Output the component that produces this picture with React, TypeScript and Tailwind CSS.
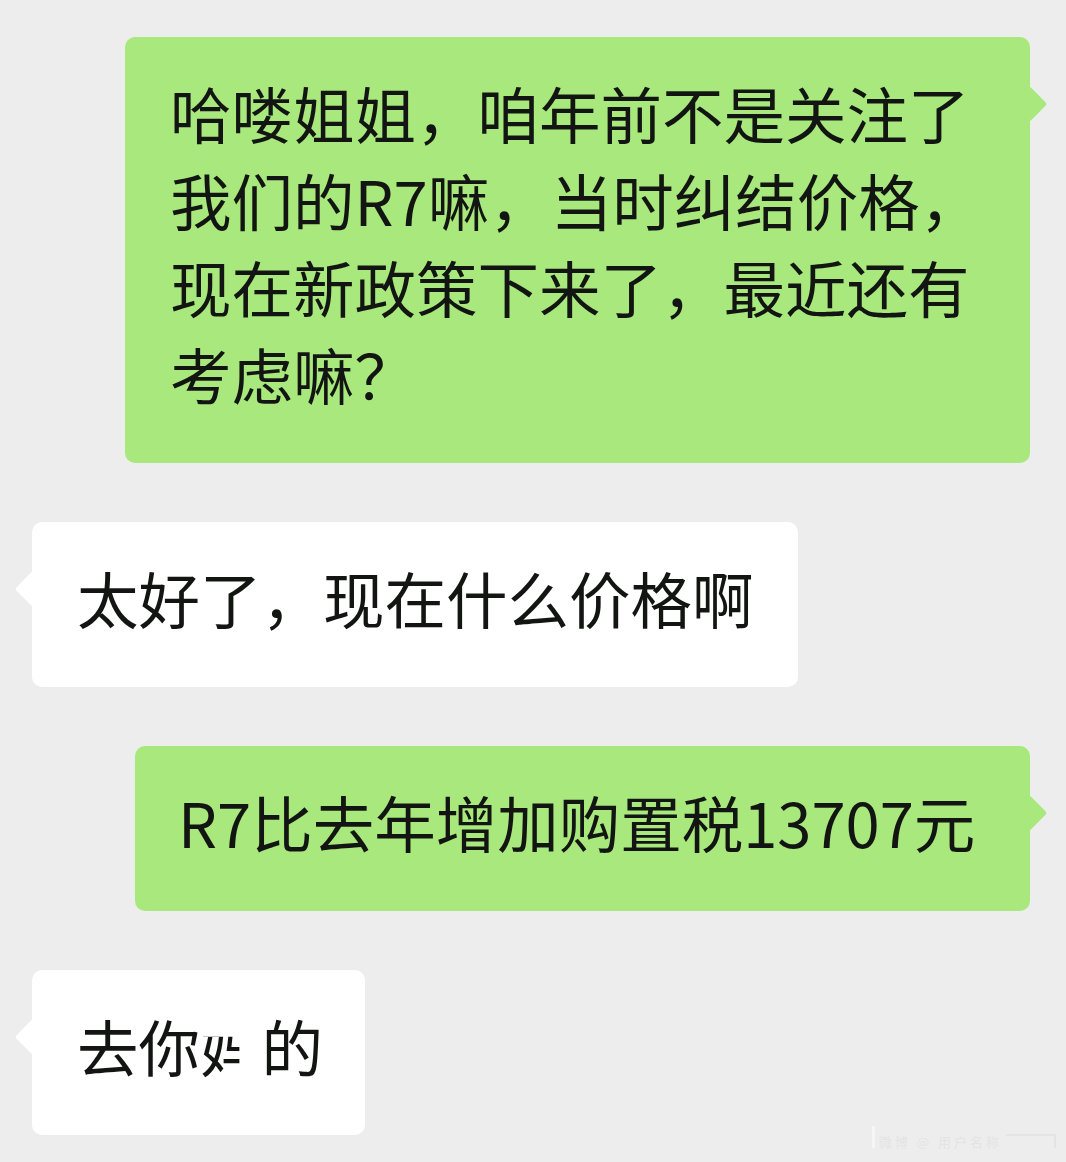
import type { ReactNode } from "react";

const font = { fontFamily: '"Noto Sans CJK SC", "Noto Sans", sans-serif' };

function Bubble({
  side,
  className,
  children,
}: {
  side: "left" | "right";
  className: string;
  children: ReactNode;
}) {
  const mine = side === "right";
  return (
    <div
      className={`relative rounded-[10px] pt-[32px] pb-[46px] text-[61.5px] leading-[87px] text-[#121512] ${
        mine ? "self-end mr-[36px] bg-[#a8e87c]" : "self-start ml-[32px] bg-white"
      } ${className}`}
    >
      <span
        className={`absolute top-[54px] h-[26px] w-[26px] rotate-45 rounded-[3px] ${
          mine ? "right-[-12px] bg-[#a8e87c]" : "left-[-12px] bg-white"
        }`}
      />
      <div className="relative">{children}</div>
    </div>
  );
}

export default function App() {
  return (
    <div
      className="relative flex min-h-[1162px] w-full flex-col gap-[59px] bg-[#ededed] pt-[37px]"
      style={font}
    >
      <Bubble side="right" className="w-[905px] pl-[45px]">
        哈喽姐姐，咱年前不是关注了
        <br />
        我们的R7嘛，当时纠结价格，
        <br />
        现在新政策下来了，最近还有
        <br />
        考虑嘛？
      </Bubble>

      <Bubble side="left" className="w-[766px] whitespace-nowrap pl-[45px]">
        太好了，现在什么价格啊
      </Bubble>

      <Bubble side="right" className="w-[895px] whitespace-nowrap pl-[43px]">
        R7比去年增加购置税13707元
      </Bubble>

      <Bubble side="left" className="w-[333px] whitespace-nowrap pl-[45px]">
        去你
        <span className="inline-block [clip-path:inset(40%_36%_6%_0)]">妈</span>
        的
      </Bubble>

      <div className="absolute bottom-[14px] right-[10px] flex items-end gap-1 text-[13px] leading-none text-[#e4e4e4]">
        <span className="h-[22px] w-[3px] bg-[#f6f6f6]" />
        <span className="tracking-[3px]">微博 @ 用户名称</span>
        <span className="h-[14px] w-[50px] rounded-tr-[2px] border-r-2 border-t-2 border-[#e4e4e4]" />
      </div>
    </div>
  );
}
